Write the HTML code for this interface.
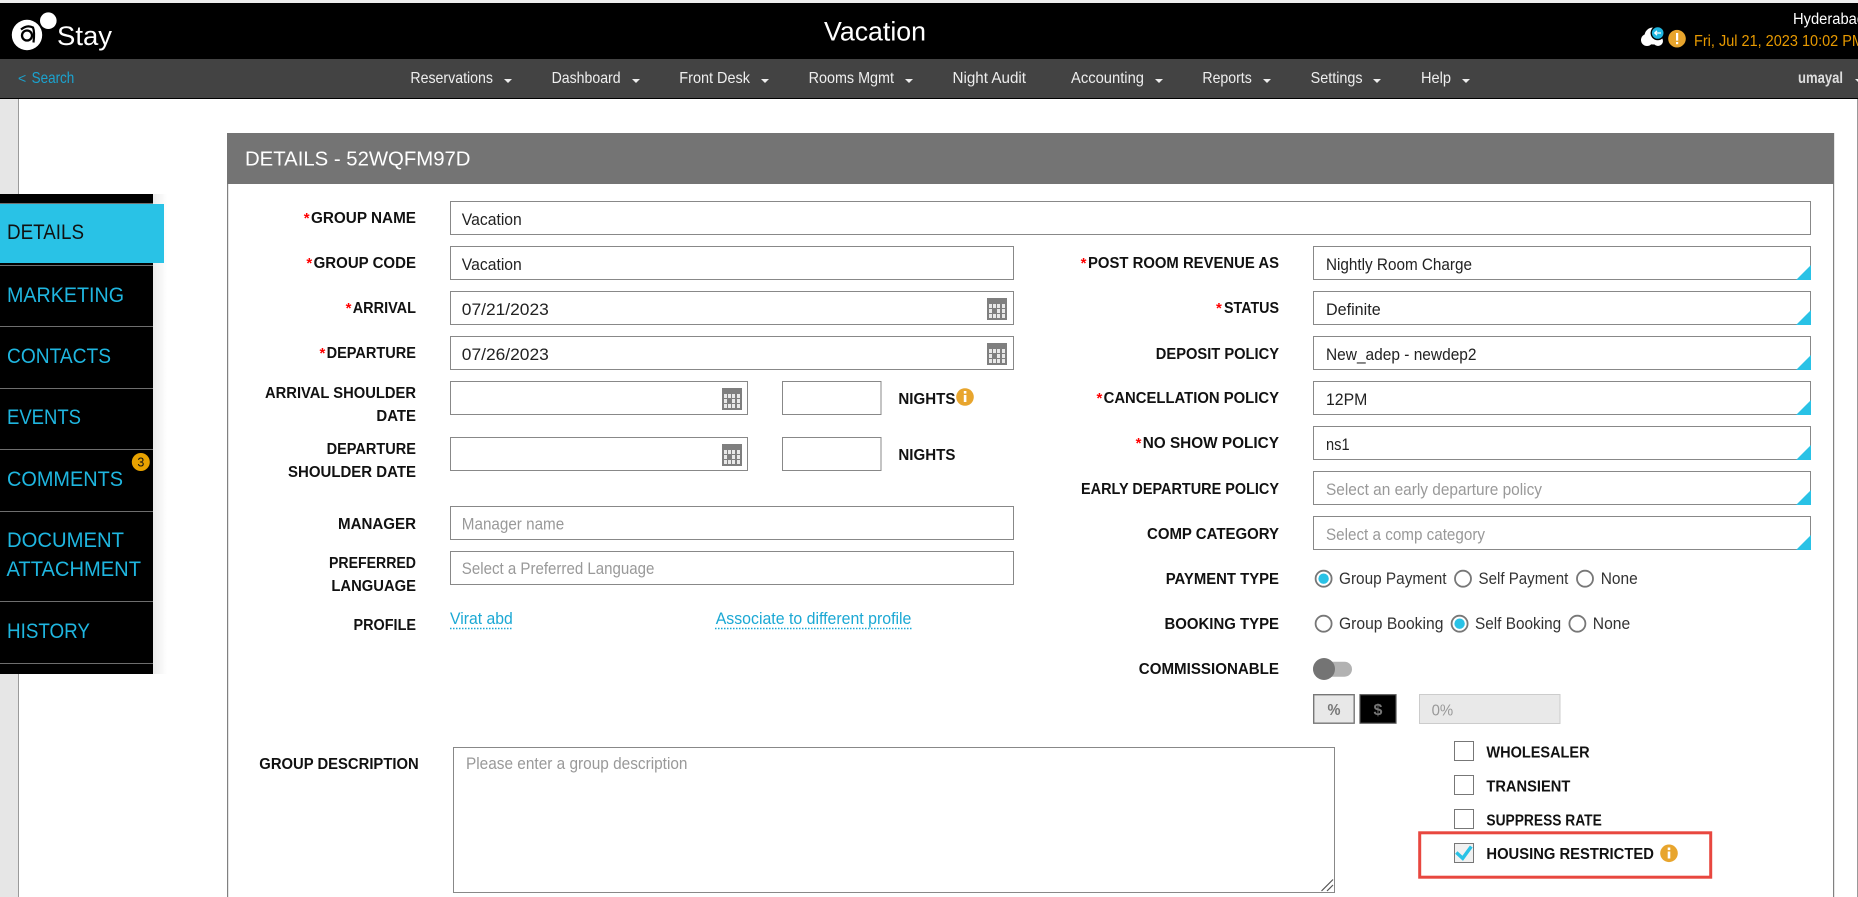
<!DOCTYPE html>
<html lang="en"><head><meta charset="utf-8"><title>Vacation - Details</title>
<style>
html,body{margin:0;padding:0;width:1858px;height:897px;overflow:hidden;background:#fff}
svg{display:block;position:absolute;left:0;top:0}
text{font-family:"Liberation Sans",sans-serif;white-space:pre}
.nav{font-size:16px;fill:#eee}
.l{font-size:16px;font-weight:700;fill:#111}
.s{font-size:15px;font-weight:700;fill:#f00}
.v{font-size:16.5px;fill:#222}
.p{font-size:16.5px;fill:#999}
.r{font-size:16.5px;fill:#333}
.m{font-size:21px;fill:#1fb6e0}
.a{font-size:16.5px;fill:#1ba8d4}
.box{fill:#fff;stroke:#888;stroke-width:1}
.tri{fill:#29c2e6}
.rad{fill:#fff;stroke:#777;stroke-width:1.8}
.chk{fill:#fff;stroke:#777;stroke-width:1}
</style></head><body>
<svg width="1858" height="897" viewBox="0 0 1858 897" xmlns="http://www.w3.org/2000/svg">
<defs>
<linearGradient id="shd" x1="0" x2="1" y1="0" y2="0"><stop offset="0" stop-color="#000" stop-opacity=".08"/><stop offset="1" stop-color="#000" stop-opacity="0"/></linearGradient>
<symbol id="cal" viewBox="0 0 20 22" width="20" height="22">
<rect width="20" height="22" fill="#7f7f7f"/>
<g fill="#e8e8e8"><rect x="2" y="6" width="3" height="4"/><rect x="6" y="6" width="3" height="4"/><rect x="10" y="6" width="3" height="4"/><rect x="15" y="6" width="3" height="4"/><rect x="2" y="11" width="3" height="4"/><rect x="10" y="11" width="3" height="4"/><rect x="15" y="11" width="3" height="4"/><rect x="2" y="16" width="3" height="4"/><rect x="6" y="16" width="3" height="4"/><rect x="10" y="16" width="3" height="4"/><rect x="15" y="16" width="3" height="4"/></g>
</symbol>
<symbol id="car" viewBox="0 0 8 4" width="8" height="4"><path d="M0 0H8L4 4Z" fill="#eee"/></symbol>
</defs>

<!-- page chrome -->
<rect width="1858" height="897" fill="#fff"/>
<rect width="1858" height="3" fill="#eee"/>
<rect y="3" width="1858" height="56" fill="#000"/>
<rect y="59" width="1858" height="39" fill="#434343"/>
<rect y="98" width="1858" height="1" fill="#000"/>
<rect y="99" width="18" height="798" fill="#e6e6e6"/>
<rect x="18" y="99" width="1" height="798" fill="#9a9a9a"/>
<rect x="1857" y="99" width="1" height="798" fill="#999"/>

<!-- logo -->
<circle cx="27" cy="35" r="15.2" fill="#fff"/>
<circle cx="48.3" cy="20.7" r="8.3" fill="#fff"/>
<circle cx="27" cy="35.5" r="5" fill="none" stroke="#000" stroke-width="2.3"/>
<path d="M21 29.5Q27 24.5 33 27.5Q34.800 32 33.500 42.500" fill="none" stroke="#000" stroke-width="2.200"/>
<text x="57" y="45" font-size="26.500" fill="#fff" textLength="55" lengthAdjust="spacingAndGlyphs">Stay</text>

<text x="824" y="40.500" font-size="27" fill="#fff" textLength="102" lengthAdjust="spacingAndGlyphs">Vacation</text>

<!-- header right -->
<text x="1793" y="24" font-size="15.500" fill="#fff" textLength="72" lengthAdjust="spacingAndGlyphs">Hyderabad</text>
<circle cx="1647" cy="40" r="6" fill="#fff"/><circle cx="1653" cy="36" r="8.500" fill="#fff"/><circle cx="1658" cy="41" r="5" fill="#fff"/>
<circle cx="1657.700" cy="33" r="6.500" fill="#1fb6e0" stroke="#000" stroke-width="1.400"/>
<path d="M1661 33H1655M1657 30.800L1654.800 33L1657 35.200" stroke="#fff" stroke-width="1.300" fill="none"/>
<circle cx="1677" cy="38.700" r="8.800" fill="#e8a52d"/>
<rect x="1676" y="33" width="2.200" height="7.600" fill="#fff"/><rect x="1676" y="42" width="2.200" height="2.200" fill="#fff"/>
<text x="1694" y="46" font-size="16" fill="#e89a00" textLength="170" lengthAdjust="spacingAndGlyphs">Fri, Jul 21, 2023 10:02 PM</text>

<!-- nav -->
<text x="18" y="83" font-size="14" fill="#1ba3cf">&lt;</text>
<text x="31.600" y="83" font-size="16" fill="#1ba3cf" textLength="42.700" lengthAdjust="spacingAndGlyphs">Search</text>
<text class="nav" x="410.400" y="83" textLength="82.600" lengthAdjust="spacingAndGlyphs">Reservations</text><use href="#car" x="504" y="79"/>
<text class="nav" x="551.600" y="83" textLength="69" lengthAdjust="spacingAndGlyphs">Dashboard</text><use href="#car" x="632" y="79"/>
<text class="nav" x="679.300" y="83" textLength="70.700" lengthAdjust="spacingAndGlyphs">Front Desk</text><use href="#car" x="761" y="79"/>
<text class="nav" x="808.600" y="83" textLength="85.400" lengthAdjust="spacingAndGlyphs">Rooms Mgmt</text><use href="#car" x="905" y="79"/>
<text class="nav" x="952.500" y="83" textLength="73.500" lengthAdjust="spacingAndGlyphs">Night Audit</text>
<text class="nav" x="1071" y="83" textLength="73" lengthAdjust="spacingAndGlyphs">Accounting</text><use href="#car" x="1155" y="79"/>
<text class="nav" x="1202.400" y="83" textLength="49.400" lengthAdjust="spacingAndGlyphs">Reports</text><use href="#car" x="1263" y="79"/>
<text class="nav" x="1310.600" y="83" textLength="52" lengthAdjust="spacingAndGlyphs">Settings</text><use href="#car" x="1373" y="79"/>
<text class="nav" x="1421" y="83" textLength="30" lengthAdjust="spacingAndGlyphs">Help</text><use href="#car" x="1462" y="79"/>
<text x="1798" y="83" font-size="16" font-weight="700" fill="#ddd" textLength="45" lengthAdjust="spacingAndGlyphs">umayal</text><use href="#car" x="1855" y="79"/>

<!-- panel -->
<rect x="227" y="133" width="1.200" height="764" fill="#808080"/>
<rect x="1833" y="133" width="1.200" height="764" fill="#808080"/>
<rect x="227" y="133" width="1607" height="51" fill="#747474"/>
<text x="245" y="165.500" font-size="20" fill="#fff" textLength="225.500" lengthAdjust="spacingAndGlyphs">DETAILS - 52WQFM97D</text>

<!-- side menu -->
<rect x="153" y="194" width="14" height="480" fill="url(#shd)"/>
<rect y="194" width="153" height="480" fill="#000"/>
<g fill="#6e6e6e"><rect y="203" width="153" height="1"/><rect y="265" width="153" height="1"/><rect y="326" width="153" height="1"/><rect y="388" width="153" height="1"/><rect y="449" width="153" height="1"/><rect y="511" width="153" height="1"/><rect y="601" width="153" height="1"/><rect y="663" width="153" height="1"/></g>
<rect y="204" width="164" height="59" fill="#29c2e6"/>
<text x="7" y="239" font-size="21" fill="#111" textLength="77" lengthAdjust="spacingAndGlyphs">DETAILS</text>
<text class="m" x="7" y="302" textLength="117" lengthAdjust="spacingAndGlyphs">MARKETING</text>
<text class="m" x="7" y="363" textLength="104" lengthAdjust="spacingAndGlyphs">CONTACTS</text>
<text class="m" x="7" y="424" textLength="74" lengthAdjust="spacingAndGlyphs">EVENTS</text>
<text class="m" x="7" y="486" textLength="116" lengthAdjust="spacingAndGlyphs">COMMENTS</text>
<text class="m" x="7" y="547" textLength="117" lengthAdjust="spacingAndGlyphs">DOCUMENT</text>
<text class="m" x="6.500" y="576" textLength="134.500" lengthAdjust="spacingAndGlyphs">ATTACHMENT</text>
<text class="m" x="7" y="638" textLength="83" lengthAdjust="spacingAndGlyphs">HISTORY</text>
<circle cx="140.800" cy="462" r="9" fill="#e8a200"/>
<text x="140.800" y="466.500" font-size="12.500" fill="#111" text-anchor="middle">3</text>

<!-- left labels -->
<text class="s" x="303.700" y="223">*</text><text class="l" x="311" y="223" textLength="105" lengthAdjust="spacingAndGlyphs">GROUP NAME</text>
<text class="s" x="306.400" y="268">*</text><text class="l" x="313.600" y="268" textLength="102.400" lengthAdjust="spacingAndGlyphs">GROUP CODE</text>
<text class="s" x="345.600" y="313">*</text><text class="l" x="352.700" y="313" textLength="63.300" lengthAdjust="spacingAndGlyphs">ARRIVAL</text>
<text class="s" x="319.500" y="358">*</text><text class="l" x="326.600" y="358" textLength="89.400" lengthAdjust="spacingAndGlyphs">DEPARTURE</text>
<text class="l" x="265" y="398" textLength="151" lengthAdjust="spacingAndGlyphs">ARRIVAL SHOULDER</text>
<text class="l" x="376.400" y="421" textLength="39.600" lengthAdjust="spacingAndGlyphs">DATE</text>
<text class="l" x="326.600" y="454" textLength="89.400" lengthAdjust="spacingAndGlyphs">DEPARTURE</text>
<text class="l" x="288" y="477" textLength="128" lengthAdjust="spacingAndGlyphs">SHOULDER DATE</text>
<text class="l" x="338" y="529" textLength="78" lengthAdjust="spacingAndGlyphs">MANAGER</text>
<text class="l" x="329" y="568" textLength="87" lengthAdjust="spacingAndGlyphs">PREFERRED</text>
<text class="l" x="331.400" y="591" textLength="84.600" lengthAdjust="spacingAndGlyphs">LANGUAGE</text>
<text class="l" x="353.500" y="630" textLength="62.500" lengthAdjust="spacingAndGlyphs">PROFILE</text>
<text class="l" x="259.300" y="769" textLength="159.400" lengthAdjust="spacingAndGlyphs">GROUP DESCRIPTION</text>

<!-- left inputs -->
<rect class="box" x="450.500" y="201.500" width="1360" height="33"/>
<rect class="box" x="450.500" y="246.500" width="563" height="33"/>
<rect class="box" x="450.500" y="291.500" width="563" height="33"/>
<rect class="box" x="450.500" y="336.500" width="563" height="33"/>
<rect class="box" x="450.500" y="381.500" width="297" height="33"/>
<rect class="box" x="782.500" y="381.500" width="98.500" height="33"/>
<rect class="box" x="450.500" y="437.500" width="297" height="33"/>
<rect class="box" x="782.500" y="437.500" width="98.500" height="33"/>
<rect class="box" x="450.500" y="506.500" width="563" height="33"/>
<rect class="box" x="450.500" y="551.500" width="563" height="33"/>
<use href="#cal" x="987" y="298"/><use href="#cal" x="987" y="343"/><use href="#cal" x="722" y="388"/><use href="#cal" x="722" y="444"/>
<text class="v" x="461.800" y="225" textLength="60" lengthAdjust="spacingAndGlyphs">Vacation</text>
<text class="v" x="461.800" y="270" textLength="60" lengthAdjust="spacingAndGlyphs">Vacation</text>
<text class="v" x="461.800" y="315" textLength="87" lengthAdjust="spacingAndGlyphs">07/21/2023</text>
<text class="v" x="461.800" y="360" textLength="87" lengthAdjust="spacingAndGlyphs">07/26/2023</text>
<text class="p" x="461.800" y="529.300" textLength="102.400" lengthAdjust="spacingAndGlyphs">Manager name</text>
<text class="p" x="461.800" y="574" textLength="192.600" lengthAdjust="spacingAndGlyphs">Select a Preferred Language</text>
<text class="l" x="898.400" y="404" textLength="57" lengthAdjust="spacingAndGlyphs">NIGHTS</text>
<circle cx="965" cy="397" r="8.800" fill="#e8a52d"/><rect x="963.800" y="395" width="2.600" height="7" fill="#fff"/><rect x="963.800" y="391" width="2.600" height="2.600" fill="#fff"/>
<text class="l" x="898.400" y="460" textLength="57" lengthAdjust="spacingAndGlyphs">NIGHTS</text>

<text class="a" x="450" y="624" textLength="62.800" lengthAdjust="spacingAndGlyphs">Virat abd</text>
<path d="M450 628.500H513" stroke="#1ba8d4" stroke-width="1.500" stroke-dasharray="1.500 1.500"/>
<text class="a" x="715.700" y="624" textLength="195.700" lengthAdjust="spacingAndGlyphs">Associate to different profile</text>
<path d="M715 628.500H911.500" stroke="#1ba8d4" stroke-width="1.500" stroke-dasharray="1.500 1.500"/>

<!-- right labels -->
<text class="s" x="1080.600" y="268">*</text><text class="l" x="1088" y="268" textLength="191" lengthAdjust="spacingAndGlyphs">POST ROOM REVENUE AS</text>
<text class="s" x="1216" y="313">*</text><text class="l" x="1224" y="313" textLength="55" lengthAdjust="spacingAndGlyphs">STATUS</text>
<text class="l" x="1155.800" y="359" textLength="123.200" lengthAdjust="spacingAndGlyphs">DEPOSIT POLICY</text>
<text class="s" x="1096.500" y="403">*</text><text class="l" x="1103.600" y="403" textLength="175.400" lengthAdjust="spacingAndGlyphs">CANCELLATION POLICY</text>
<text class="s" x="1135.600" y="448">*</text><text class="l" x="1142.700" y="448" textLength="136.300" lengthAdjust="spacingAndGlyphs">NO SHOW POLICY</text>
<text class="l" x="1081" y="494" textLength="198" lengthAdjust="spacingAndGlyphs">EARLY DEPARTURE POLICY</text>
<text class="l" x="1147" y="539" textLength="132" lengthAdjust="spacingAndGlyphs">COMP CATEGORY</text>
<text class="l" x="1165.700" y="584" textLength="113.300" lengthAdjust="spacingAndGlyphs">PAYMENT TYPE</text>
<text class="l" x="1164.500" y="629" textLength="114.500" lengthAdjust="spacingAndGlyphs">BOOKING TYPE</text>
<text class="l" x="1138.800" y="674" textLength="140.200" lengthAdjust="spacingAndGlyphs">COMMISSIONABLE</text>

<!-- right selects -->
<rect class="box" x="1313.500" y="246.500" width="497" height="33"/><path class="tri" d="M1811 265V280H1796Z"/>
<rect class="box" x="1313.500" y="291.500" width="497" height="33"/><path class="tri" d="M1811 310V325H1796Z"/>
<rect class="box" x="1313.500" y="336.500" width="497" height="33"/><path class="tri" d="M1811 355V370H1796Z"/>
<rect class="box" x="1313.500" y="381.500" width="497" height="33"/><path class="tri" d="M1811 400V415H1796Z"/>
<rect class="box" x="1313.500" y="426.500" width="497" height="33"/><path class="tri" d="M1811 445V460H1796Z"/>
<rect class="box" x="1313.500" y="471.500" width="497" height="33"/><path class="tri" d="M1811 490V505H1796Z"/>
<rect class="box" x="1313.500" y="516.500" width="497" height="33"/><path class="tri" d="M1811 535V550H1796Z"/>
<text class="v" x="1326" y="270" textLength="146" lengthAdjust="spacingAndGlyphs">Nightly Room Charge</text>
<text class="v" x="1326" y="315" textLength="54.700" lengthAdjust="spacingAndGlyphs">Definite</text>
<text class="v" x="1326" y="360" textLength="150.500" lengthAdjust="spacingAndGlyphs">New_adep - newdep2</text>
<text class="v" x="1326" y="405" textLength="41.300" lengthAdjust="spacingAndGlyphs">12PM</text>
<text class="v" x="1326" y="450" textLength="23.600" lengthAdjust="spacingAndGlyphs">ns1</text>
<text class="p" x="1326" y="495" textLength="216" lengthAdjust="spacingAndGlyphs">Select an early departure policy</text>
<text class="p" x="1326" y="540" textLength="159" lengthAdjust="spacingAndGlyphs">Select a comp category</text>

<!-- radios -->
<circle class="rad" cx="1323.600" cy="578.700" r="8"/><circle cx="1323.600" cy="578.700" r="5.200" fill="#29c2e6"/>
<text class="r" x="1339" y="584" textLength="107.500" lengthAdjust="spacingAndGlyphs">Group Payment</text>
<circle class="rad" cx="1463" cy="578.700" r="8"/>
<text class="r" x="1478.500" y="584" textLength="89.800" lengthAdjust="spacingAndGlyphs">Self Payment</text>
<circle class="rad" cx="1585" cy="578.700" r="8"/>
<text class="r" x="1600.700" y="584" textLength="37" lengthAdjust="spacingAndGlyphs">None</text>
<circle class="rad" cx="1323.600" cy="623.700" r="8"/>
<text class="r" x="1339" y="629" textLength="104.400" lengthAdjust="spacingAndGlyphs">Group Booking</text>
<circle class="rad" cx="1459.600" cy="623.700" r="8"/><circle cx="1459.600" cy="623.700" r="5.200" fill="#29c2e6"/>
<text class="r" x="1475" y="629" textLength="86.200" lengthAdjust="spacingAndGlyphs">Self Booking</text>
<circle class="rad" cx="1577.400" cy="623.700" r="8"/>
<text class="r" x="1592.800" y="629" textLength="37.400" lengthAdjust="spacingAndGlyphs">None</text>

<!-- toggle -->
<rect x="1313" y="661.700" width="39" height="15" rx="7.500" fill="#b2b2b2"/>
<circle cx="1324" cy="669" r="11" fill="#747474"/>

<!-- unit buttons -->
<rect x="1313.700" y="694.700" width="40.500" height="28.500" fill="#e8e8e8" stroke="#777" stroke-width="1.400"/>
<text x="1334" y="715" font-size="16" font-weight="700" fill="#777" text-anchor="middle" textLength="13" lengthAdjust="spacingAndGlyphs">%</text>
<rect x="1360" y="694.700" width="36" height="28.500" fill="#000" stroke="#555" stroke-width="1.200"/>
<text x="1378" y="715" font-size="16" font-weight="700" fill="#777" text-anchor="middle">$</text>
<rect x="1419.500" y="694.500" width="140.500" height="29" fill="#e9e9e9" stroke="#ccc" stroke-width="1"/>
<text x="1431.600" y="715.500" font-size="16" fill="#999" textLength="21.600" lengthAdjust="spacingAndGlyphs">0%</text>

<!-- textarea -->
<rect class="box" x="453.500" y="747.500" width="881" height="145"/>
<text class="p" x="466" y="769" textLength="221.500" lengthAdjust="spacingAndGlyphs">Please enter a group description</text>
<path d="M1321.500 891L1333 879.500M1327 891L1333 885" stroke="#555" stroke-width="1.200" fill="none"/>

<!-- checkboxes -->
<rect class="chk" x="1454.500" y="741.500" width="19" height="19"/>
<text class="l" x="1486.400" y="757.700" textLength="103.200" lengthAdjust="spacingAndGlyphs">WHOLESALER</text>
<rect class="chk" x="1454.500" y="775.500" width="19" height="19"/>
<text class="l" x="1486.400" y="791.700" textLength="83.900" lengthAdjust="spacingAndGlyphs">TRANSIENT</text>
<rect class="chk" x="1454.500" y="809.500" width="19" height="19"/>
<text class="l" x="1486.400" y="825.700" textLength="115.400" lengthAdjust="spacingAndGlyphs">SUPPRESS RATE</text>
<rect x="1454.500" y="843.500" width="19" height="19" fill="#f1f1f1" stroke="#777" stroke-width="1"/>
<path d="M1456.300 852.500L1462.700 858.300L1471.300 846.500" fill="none" stroke="#29c2e6" stroke-width="3.400"/>
<text class="l" x="1486.400" y="859" textLength="167.500" lengthAdjust="spacingAndGlyphs">HOUSING RESTRICTED</text>
<circle cx="1669" cy="853.300" r="8.800" fill="#e8a52d"/><rect x="1667.700" y="851.500" width="2.600" height="7" fill="#fff"/><rect x="1667.700" y="847.500" width="2.600" height="2.600" fill="#fff"/>
<rect x="1419.700" y="832.800" width="291" height="44.400" fill="none" stroke="#e8473f" stroke-width="3"/>
</svg>
</body></html>
